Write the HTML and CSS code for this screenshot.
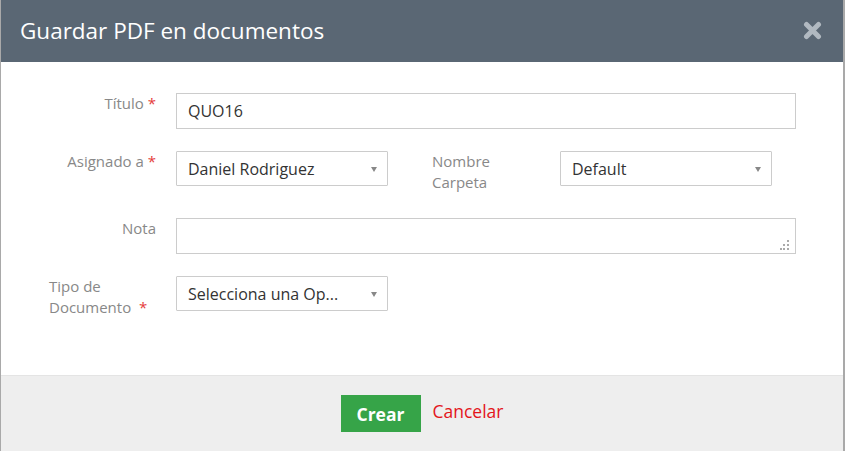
FILE: index.html
```html
<!DOCTYPE html>
<html>
	<head>
		<meta charset="utf-8">
		<title>Guardar PDF en documentos</title>
		<link rel="stylesheet" href="styles.css">
	</head>
	<body>
	<div class="modal">
		<div class="modal-header">
			<h1>Guardar PDF en documentos</h1>
			<svg class="close" width="19" height="19" viewBox="0 0 19 19"><path d="M3.5 3.5L15.5 15.5M15.5 3.5L3.5 15.5" stroke="#b1b9c1" stroke-width="5" stroke-linecap="round"/></svg>
		</div>
		<div class="modal-body">
			<div class="row row-titulo">
				<label class="lbl">Título <span class="req">*</span></label>
				<div class="field wide">QUO16</div>
			</div>
			<div class="row row-asig">
				<label class="lbl">Asignado a <span class="req">*</span></label>
				<div class="field select">Daniel Rodriguez<span class="caret"></span></div>
				<label class="lbl2">Nombre<br>Carpeta</label>
				<div class="field select">Default<span class="caret"></span></div>
			</div>
			<div class="row row-nota">
				<label class="lbl">Nota</label>
				<div class="field wide area">
					<svg class="grip" width="10" height="10" viewBox="0 0 10 10" fill="#aaa">
						<rect x="7" y="0" width="2" height="2"/>
						<rect x="3" y="4" width="2" height="2"/><rect x="7" y="4" width="2" height="2"/>
						<rect x="0" y="8" width="2" height="2"/><rect x="3" y="8" width="2" height="2"/><rect x="7" y="8" width="2" height="2"/>
					</svg>
				</div>
			</div>
			<div class="row row-tipo">
				<label class="lbl lbl-left">Tipo de<br>Documento&nbsp; <span class="req">*</span></label>
				<div class="field select">Selecciona una Op...<span class="caret"></span></div>
			</div>
		</div>
		<div class="modal-footer">
			<button class="btn-crear">Crear</button>
			<a class="cancelar" href="#">Cancelar</a>
		</div>
	</div>
	</body>
</html>
```

FILE: styles.css
```css
*{
	margin: 0px;
	padding: 0px;
	box-sizing: border-box;
}
body{
	font-family: "Open Sans", "Liberation Sans", sans-serif;
	background: #fff;
}
.modal{
	width: 845px;
	height: 451px;
	border-left: 1px solid #a9a9a9;
	border-right: 2px solid #a9a9a9;
	display: flex;
	flex-direction: column;
}
.modal-header{
	height: 62px;
	background: #5a6774;
	display: flex;
	align-items: center;
	justify-content: space-between;
	padding: 0 21px 0 19px;
}
.modal-header h1{
	color: #fff;
	font-size: 22.5px;
	font-weight: normal;
	margin-top: -1px;
}
.close{
	margin-top: -2px;
}
.modal-body{
	flex: 1;
	padding-top: 31px;
}
.row{
	display: flex;
	align-items: flex-start;
}
.row-titulo{ margin-bottom: 22px; }
.row-asig{ margin-bottom: 25px; }
.row-nota{ margin-bottom: 22px; }
.lbl{
	width: 155px;
	text-align: right;
	font-size: 15px;
	line-height: 21px;
	color: #888;
	padding-top: 0px;
	margin-right: 20px;
}
.lbl-left{
	text-align: left;
	padding-left: 48px;
}
.lbl2{
	font-size: 15px;
	line-height: 21px;
	color: #888;
	margin-left: 44px;
	width: 128px;
}
.req{
	color: #e53b3b;
}
.field{
	height: 36px;
	border: 1px solid #ccc;
	font-size: 16px;
	color: #333;
	padding: 0 11px;
	display: flex;
	align-items: center;
	position: relative;
}
.wide{
	width: 620px;
}
.select{
	width: 212px;
	height: 35px;
	border-radius: 1px;
}
.caret{
	position: absolute;
	right: 10px;
	top: 15px;
	border-left: 3.5px solid transparent;
	border-right: 3.5px solid transparent;
	border-top: 5px solid #888;
}
.grip{
	position: absolute;
	right: 5px;
	bottom: 3px;
}
.modal-footer{
	height: 76px;
	background: #eee;
	border-top: 1px solid #e4e4e4;
	display: flex;
	justify-content: center;
	align-items: flex-start;
	padding-top: 19px;
	gap: 12px;
}
.btn-crear{
	width: 80px;
	height: 37px;
	background: #36a448;
	border: none;
	color: #fff;
	font-family: "Open Sans", "Liberation Sans", sans-serif;
	font-weight: bold;
	font-size: 17.5px;
}
.cancelar{
	color: #e3151b;
	font-size: 17.5px;
	text-decoration: none;
	line-height: 32px;
}
```
